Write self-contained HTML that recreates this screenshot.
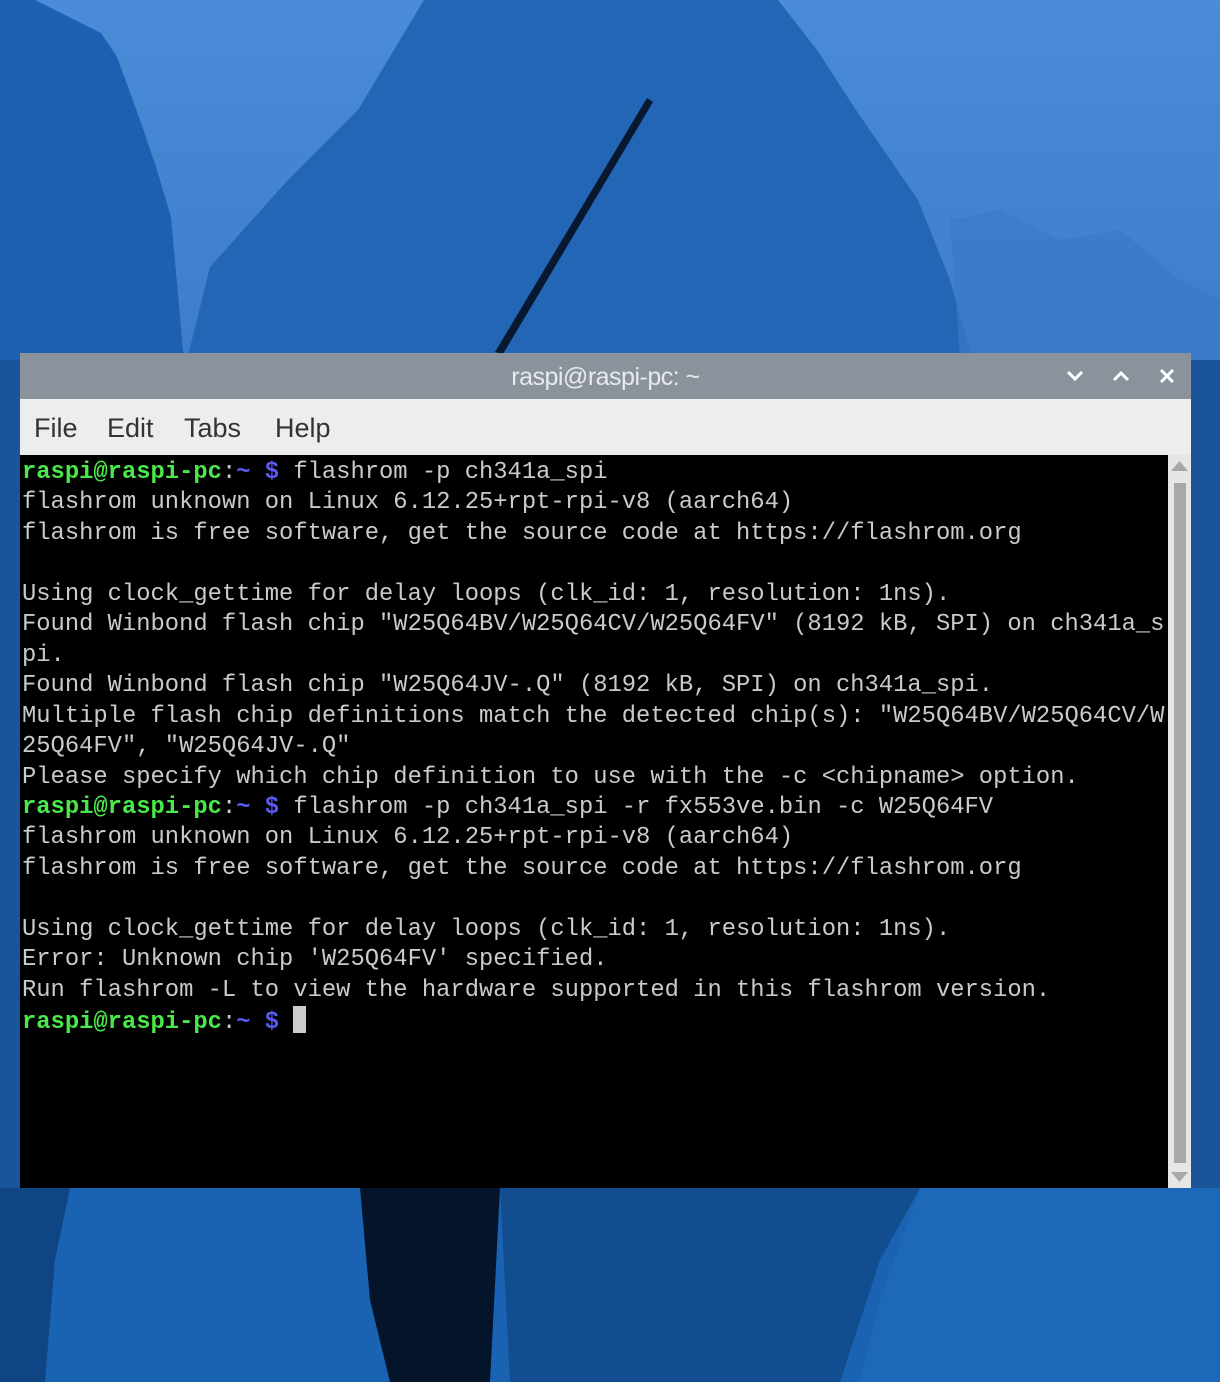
<!DOCTYPE html>
<html><head><meta charset="utf-8"><style>
body{margin:0;width:1220px;height:1382px;overflow:hidden;position:relative;background:#1a5599;font-family:"Liberation Sans",sans-serif}
svg.bg{position:absolute;left:0;top:0}
.win{position:absolute;left:20px;top:353px;width:1171px;height:835px;background:#000}
.title{position:absolute;left:0;top:0;width:1171px;height:46px;background:#8a939b;color:#e8eaec;font-size:25px;text-align:center;line-height:48px;letter-spacing:-0.5px}
.menu{position:absolute;left:0;top:46px;width:1171px;height:56px;background:#ededed;font-size:27px;color:#333;line-height:58px}
.menu span{position:absolute}
.term{position:absolute;left:2px;top:102px;width:1146px;height:730px;background:#000;font-family:"Liberation Mono",monospace;font-size:23.8px;line-height:30.45px;color:#cacaca;white-space:pre;padding-top:3px}
.g{color:#4be84b;font-weight:bold}.b{color:#5a5af0;font-weight:bold}
.sb{position:absolute;left:1148px;top:102px;width:23px;height:733px;background:#e6e6e6}
.thumb{position:absolute;left:6px;top:28px;width:12px;height:680px;background:#a8a8a8}
.cur{display:inline-block;width:13px;height:27px;background:#ccc;vertical-align:-5px}
</style></head><body>
<svg class="bg" width="1220" height="1382" viewBox="0 0 1220 1382">
<defs><linearGradient id="sky" x1="0" y1="0" x2="0" y2="1"><stop offset="0" stop-color="#4a8cd8"/><stop offset="1" stop-color="#3d7ccb"/></linearGradient></defs>
<rect width="1220" height="360" fill="url(#sky)"/>
<path d="M0 0 L35 0 L101 33 L117 57 L140 120 L156 167 L171 217 L183 350 L185 360 L0 360Z" fill="#1d5fb0"/>
<path d="M424 0 L778 0 L817 50 L856 110 L918 200 L950 280 L973 360 L187 360 L210 267 L288 180 L358 110Z" fill="#2366b6"/>
<path d="M950 220 L1000 210 L1060 240 L1120 230 L1180 280 L1220 300 L1220 360 L960 360Z" fill="#3a79c6" opacity=".7"/>
<path d="M495 352 L647 98 L653 102 L503 354Z" fill="#071830"/>
<rect y="1188" width="1220" height="194" fill="#1a63b3"/>
<path d="M0 1188 L70 1188 L55 1260 L45 1382 L0 1382Z" fill="#0f4585"/>
<path d="M360 1188 L500 1188 L490 1382 L390 1382 L370 1300Z" fill="#04152b"/>
<path d="M500 1188 L920 1188 L880 1260 L840 1382 L510 1382Z" fill="#124d90"/>
<path d="M920 1188 L1220 1188 L1220 1382 L860 1382 L880 1300Z" fill="#1d68b8"/>
</svg>
<div class="win">
<div class="title">raspi@raspi-pc: ~
<svg style="position:absolute;left:1046px;top:17px" width="18" height="12"><path d="M2 2 L9 9 L16 2" stroke="#fff" stroke-width="3" fill="none"/></svg>
<svg style="position:absolute;left:1092px;top:17px" width="18" height="12"><path d="M2 10 L9 3 L16 10" stroke="#fff" stroke-width="3" fill="none"/></svg>
<svg style="position:absolute;left:1139px;top:15px" width="16" height="16"><path d="M2 2 L14 14 M14 2 L2 14" stroke="#fff" stroke-width="3"/></svg>
</div>
<div class="menu"><span style="left:14px">File</span><span style="left:87px">Edit</span><span style="left:164px">Tabs</span><span style="left:255px">Help</span></div>
<div class="term"><span class="g">raspi@raspi-pc</span>:<span class="b">~ $</span> flashrom -p ch341a_spi
flashrom unknown on Linux 6.12.25+rpt-rpi-v8 (aarch64)
flashrom is free software, get the source code at https://flashrom.org

Using clock_gettime for delay loops (clk_id: 1, resolution: 1ns).
Found Winbond flash chip "W25Q64BV/W25Q64CV/W25Q64FV" (8192 kB, SPI) on ch341a_s
pi.
Found Winbond flash chip "W25Q64JV-.Q" (8192 kB, SPI) on ch341a_spi.
Multiple flash chip definitions match the detected chip(s): "W25Q64BV/W25Q64CV/W
25Q64FV", "W25Q64JV-.Q"
Please specify which chip definition to use with the -c &lt;chipname&gt; option.
<span class="g">raspi@raspi-pc</span>:<span class="b">~ $</span> flashrom -p ch341a_spi -r fx553ve.bin -c W25Q64FV
flashrom unknown on Linux 6.12.25+rpt-rpi-v8 (aarch64)
flashrom is free software, get the source code at https://flashrom.org

Using clock_gettime for delay loops (clk_id: 1, resolution: 1ns).
Error: Unknown chip 'W25Q64FV' specified.
Run flashrom -L to view the hardware supported in this flashrom version.
<span class="g">raspi@raspi-pc</span>:<span class="b">~ $</span> <span class="cur"></span></div>
<div class="sb"><svg style="position:absolute;left:3px;top:6px" width="17" height="10"><path d="M8.5 0 L17 10 L0 10Z" fill="#a8a8a8"/></svg><div class="thumb"></div><svg style="position:absolute;left:3px;top:717px" width="17" height="10"><path d="M0 0 L17 0 L8.5 10Z" fill="#a8a8a8"/></svg></div>
</div>
</body></html>
